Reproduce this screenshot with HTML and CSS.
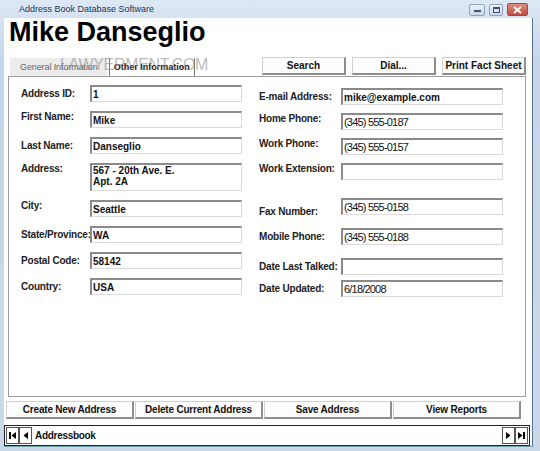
FILE: index.html
```html
<!DOCTYPE html>
<html lang="en">
<head>
    <meta charset="UTF-8">
    <title>Address Book Database Software</title>
    <link rel="stylesheet" href="styles.css">
</head>
<body>
    <div class="window">
        <div class="titlebar">
            <span class="title">Address Book Database Software</span>
            <div class="controls">
                <span class="ctl min"><span class="dash"></span></span>
                <span class="ctl max"><span class="box"></span></span>
                <span class="ctl close">
                    <svg width="9" height="8" viewBox="0 0 9 8"><path d="M1 1 L8 7 M8 1 L1 7" stroke="#fff" stroke-width="1.8"/></svg>
                </span>
            </div>
        </div>

        <div class="client">
            <h1 class="name">Mike Danseglio</h1>

            <div class="toprow">
                <div class="tabs">
                    <div class="tab">General Information</div>
                    <div class="tab active">Other Information</div>
                    <div class="watermark">LAWYERMENT.COM</div>
                </div>
                <div class="actions">
                    <button class="btn">Search</button>
                    <button class="btn">Dial...</button>
                    <button class="btn">Print Fact Sheet</button>
                </div>
            </div>

            <div class="panel">
                <div class="col left">
                    <div class="field"><label>Address ID:</label><input type="text" value="1" readonly></div>
                    <div class="field"><label class="top">First Name:</label><input type="text" value="Mike" readonly></div>
                    <div class="field"><label>Last Name:</label><input type="text" value="Danseglio" readonly></div>
                    <div class="field tall"><label class="top">Address:</label><textarea readonly>567 - 20th Ave. E.
Apt. 2A</textarea></div>
                    <div class="field"><label class="top">City:</label><input type="text" value="Seattle" readonly></div>
                    <div class="field"><label>State/Province:</label><input type="text" value="WA" readonly></div>
                    <div class="field"><label>Postal Code:</label><input type="text" value="58142" readonly></div>
                    <div class="field"><label>Country:</label><input type="text" value="USA" readonly></div>
                </div>
                <div class="col right">
                    <div class="field"><label>E-mail Address:</label><input type="text" value="mike@example.com" readonly></div>
                    <div class="field"><label class="top">Home Phone:</label><input type="text" class="num" value="(345) 555-0187" readonly></div>
                    <div class="field"><label class="top">Work Phone:</label><input type="text" class="num" value="(345) 555-0157" readonly></div>
                    <div class="field"><label class="top">Work Extension:</label><input type="text" readonly></div>
                    <div class="field"><label class="low">Fax Number:</label><input type="text" class="num" value="(345) 555-0158" readonly></div>
                    <div class="field"><label>Mobile Phone:</label><input type="text" class="num" value="(345) 555-0188" readonly></div>
                    <div class="field"><label>Date Last Talked:</label><input type="text" readonly></div>
                    <div class="field"><label>Date Updated:</label><input type="text" class="num" value="6/18/2008" readonly></div>
                </div>
            </div>

            <div class="bottombar">
                <button class="btn wide">Create New Address</button>
                <button class="btn wide">Delete Current Address</button>
                <button class="btn wide">Save Address</button>
                <button class="btn wide">View Reports</button>
            </div>

            <div class="statusbar">
                <span class="nav">
                    <svg width="9" height="9" viewBox="0 0 9 9"><rect x="1" y="1" width="2" height="7" fill="#000"/><path d="M8 1 L3.5 4.5 L8 8 Z" fill="#000"/></svg>
                </span>
                <span class="nav">
                    <svg width="9" height="9" viewBox="0 0 9 9"><path d="M7 1 L2.5 4.5 L7 8 Z" fill="#000"/></svg>
                </span>
                <span class="recname">Addressbook</span>
                <span class="nav">
                    <svg width="9" height="9" viewBox="0 0 9 9"><path d="M2 1 L6.5 4.5 L2 8 Z" fill="#000"/></svg>
                </span>
                <span class="nav">
                    <svg width="9" height="9" viewBox="0 0 9 9"><path d="M1 1 L5.5 4.5 L1 8 Z" fill="#000"/><rect x="6" y="1" width="2" height="7" fill="#000"/></svg>
                </span>
            </div>
        </div>
    </div>
</body>
</html>
```

FILE: styles.css
```css
*{
    padding: 0;
    margin: 0;
    box-sizing: border-box;
    outline: none;
}

body{
    width: 540px;
    height: 451px;
    overflow: hidden;
    font-family: "Liberation Sans", Arial, Helvetica, sans-serif;
    background-color: #c9d8ea;
}

/* window frame */
.window {
    width: 540px;
    height: 451px;
    display: flex;
    flex-direction: column;
    background: linear-gradient(#dde8f5, #c6d6ea 60px, #c9d9e9);
}
.titlebar {
    height: 18px;
    flex-shrink: 0;
    display: flex;
    align-items: center;
    justify-content: space-between;
    padding: 0 12px 0 19px;
}
.title {
    font-size: 9px;
    color: #1d3450;
}
.controls {
    display: flex;
    align-items: center;
    gap: 4px;
    margin-top: 1px;
}
.ctl {
    height: 12px;
    display: flex;
    align-items: center;
    justify-content: center;
    border: 1px solid #8fa3bd;
    border-radius: 2px;
    background: linear-gradient(#eef3fa, #cad7e8);
}
.min { width: 16px; }
.max { width: 14px; }
.close {
    width: 21px;
    height: 13px;
    border-color: #9c4a44;
    background: linear-gradient(#e08a80, #c24c40);
}
.dash {
    width: 7px;
    height: 2px;
    margin-top: 3px;
    background-color: #3d5370;
}
.box {
    width: 7px;
    height: 6px;
    border: 1px solid #3d5370;
    border-top-width: 2px;
}

.client {
    flex: 1;
    margin: 0 7px 5px 4px;
    background-color: #fff;
    border-right: 1px solid #587594;
    border-bottom: 1px solid #6f9fab;
    display: flex;
    flex-direction: column;
}

.name {
    font-size: 27px;
    line-height: 28px;
    font-weight: bold;
    color: #000;
    margin-left: 5px;
}

/* tabs + top buttons */
.toprow {
    height: 19px;
    margin-top: 11px;
    padding: 0 6px 0 6px;
    display: flex;
    justify-content: space-between;
}
.tabs {
    position: relative;
    display: flex;
    align-self: flex-end;
    height: 18px;
}
.tab {
    height: 18px;
    line-height: 18px;
    font-size: 9px;
    padding: 0 9px 0 10px;
    background-color: #ececec;
    color: #666;
    letter-spacing: -0.1px;
}
.tab.active {
    margin-left: 2px;
    padding: 0 4px;
    background-color: #fff;
    color: #111;
    font-weight: bold;
    letter-spacing: 0;
    border-left: 1px solid #777;
    border-right: 1px solid #777;
}
.watermark {
    position: absolute;
    left: 50px;
    top: -2px;
    font-size: 16px;
    letter-spacing: -0.3px;
    color: rgba(140, 140, 140, 0.6);
    pointer-events: none;
}
.actions {
    display: flex;
    gap: 6px;
}

.btn {
    width: 84px;
    height: 18px;
    font-family: "Liberation Sans", Arial, sans-serif;
    font-size: 10px;
    font-weight: bold;
    color: #111;
    background-color: #fdfdfd;
    border: 1px solid #d0d0d0;
    border-right: 2px solid #8e8e8e;
    border-bottom: 2px solid #8e8e8e;
    cursor: pointer;
}
.btn.wide {
    width: 128px;
    letter-spacing: -0.2px;
}

/* main record panel */
.panel {
    height: 321px;
    margin: 0 6px 0 4px;
    border: 1px solid #9d9d9d;
    padding: 8px 0 0 12px;
    display: flex;
    gap: 17px;
}
.col {
    display: flex;
    flex-direction: column;
}
.left { gap: 9px; }
.right {
    gap: 8px;
    margin-top: 3px;
}
.right .field:nth-child(5) { margin-top: 10px; }
.right .field:nth-child(6),
.right .field:nth-child(7) { margin-top: 5px; }
.right .field:nth-child(8) { margin-top: -3px; }

.field {
    display: flex;
    align-items: center;
    height: 17px;
}
.field.tall { height: 28px; }
.field label {
    font-size: 10px;
    line-height: 12px;
    font-weight: bold;
    color: #222;
    letter-spacing: -0.2px;
    white-space: nowrap;
}
.field label.top { align-self: flex-start; }
.field label.low {
    align-self: flex-end;
    margin-bottom: -3px;
}
.left label { width: 69px; }
.right label { width: 82px; }

input, textarea {
    height: 17px;
    font-family: "Liberation Sans", Arial, sans-serif;
    font-size: 10px;
    font-weight: bold;
    color: #111;
    background-color: #fff;
    border: 1px solid #dadada;
    border-top: 2px solid #8a8a8a;
    border-left: 2px solid #8a8a8a;
    padding: 0 1px;
}
.left input, .left textarea { width: 152px; }
.right input { width: 162px; }
textarea {
    height: 28px;
    line-height: 11px;
    resize: none;
    overflow: hidden;
}
input.num {
    font-size: 11px;
    font-weight: normal;
    letter-spacing: -0.8px;
}

/* bottom buttons */
.bottombar {
    display: flex;
    gap: 1px;
    margin-top: 4px;
    padding-left: 2px;
}

/* record navigator */
.statusbar {
    height: 21px;
    margin: 6px 2px 0 0;
    border: 1px solid #222;
    display: flex;
    align-items: center;
    padding: 0 1px;
}
.nav {
    width: 13px;
    height: 17px;
    border: 1px solid #555;
    display: flex;
    align-items: center;
    justify-content: center;
}
.recname {
    flex: 1;
    padding-left: 3px;
    font-size: 10px;
    font-weight: bold;
    color: #111;
    letter-spacing: -0.3px;
}
```
